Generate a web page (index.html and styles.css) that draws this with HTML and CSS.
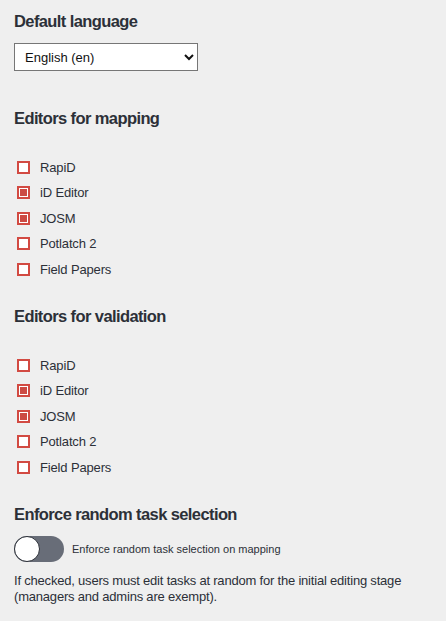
FILE: index.html
```html
<!DOCTYPE html>
<html lang="en">
<head>
<meta charset="utf-8">
<link rel="stylesheet" href="styles.css">
</head>
<body>
<main class="settings">
  <section class="section">
    <h3 class="heading">Default language</h3>
    <select class="select">
      <option>English (en)</option>
    </select>
  </section>

  <section class="section">
    <h3 class="heading heading-list">Editors for mapping</h3>
    <ul class="checklist">
      <li class="check-row"><span class="box"></span>RapiD</li>
      <li class="check-row"><span class="box checked"></span>iD Editor</li>
      <li class="check-row"><span class="box checked"></span>JOSM</li>
      <li class="check-row"><span class="box"></span>Potlatch 2</li>
      <li class="check-row"><span class="box"></span>Field Papers</li>
    </ul>
  </section>

  <section class="section">
    <h3 class="heading heading-list">Editors for validation</h3>
    <ul class="checklist">
      <li class="check-row"><span class="box"></span>RapiD</li>
      <li class="check-row"><span class="box checked"></span>iD Editor</li>
      <li class="check-row"><span class="box checked"></span>JOSM</li>
      <li class="check-row"><span class="box"></span>Potlatch 2</li>
      <li class="check-row"><span class="box"></span>Field Papers</li>
    </ul>
  </section>

  <section class="section">
    <h3 class="heading">Enforce random task selection</h3>
    <div class="toggle-row">
      <span class="toggle"><span class="knob"></span></span>
      <span class="toggle-label">Enforce random task selection on mapping</span>
    </div>
    <p class="desc">If checked, users must edit tasks at random for the initial editing stage (managers and admins are exempt).</p>
  </section>
</main>
</body>
</html>
```

FILE: styles.css
```css
html, body {
  margin: 0;
  padding: 0;
  background: #efefef;
}
body {
  font-family: "Liberation Sans", Arial, sans-serif;
  color: #2c3038;
}
.settings {
  display: flex;
  flex-direction: column;
  padding: 11px 14px 0 14px;
}
.section {
  display: flex;
  flex-direction: column;
  align-items: flex-start;
}
.section + .section {
  margin-top: 37px;
}
.heading {
  margin: 0;
  font-size: 16.5px;
  line-height: 20px;
  font-weight: 700;
  letter-spacing: -0.6px;
}
.heading-list {
  margin-bottom: 27px;
}
.select {
  margin-top: 12px;
  width: 184px;
  height: 28px;
  font-family: "Liberation Sans", Arial, sans-serif;
  font-size: 13px;
  color: #111;
  background: #fff;
  border: 1px solid #767676;
  border-radius: 0;
  padding: 0 6px;
}
.checklist {
  list-style: none;
  margin: 0 0 -13px 0;
  padding: 0;
}
.check-row {
  display: flex;
  align-items: center;
  height: 25px;
  font-size: 13px;
  letter-spacing: -0.15px;
}
.check-row:nth-child(odd):not(:first-child) {
  margin-top: 1px;
}
.box {
  box-sizing: border-box;
  flex: none;
  width: 13px;
  height: 13px;
  margin-left: 3px;
  margin-right: 10px;
  border: 2px solid #d24a42;
  background: #fff;
  display: flex;
  align-items: center;
  justify-content: center;
}
.box.checked::after {
  content: "";
  width: 7px;
  height: 7px;
  background: #cc4a43;
}
.toggle-row {
  margin-top: 12px;
  display: flex;
  align-items: center;
  gap: 8px;
}
.toggle {
  position: relative;
  display: block;
  width: 50px;
  height: 26px;
  border-radius: 13px;
  background: #686d78;
}
.knob {
  position: absolute;
  left: 0;
  top: 0;
  box-sizing: border-box;
  width: 26px;
  height: 26px;
  border-radius: 50%;
  background: #fff;
  border: 1.5px solid #2c3038;
}
.toggle-label {
  font-size: 11px;
}
.desc {
  margin: 11px 0 0 0;
  font-size: 13px;
  line-height: 16px;
  letter-spacing: -0.2px;
  max-width: 410px;
}
```
